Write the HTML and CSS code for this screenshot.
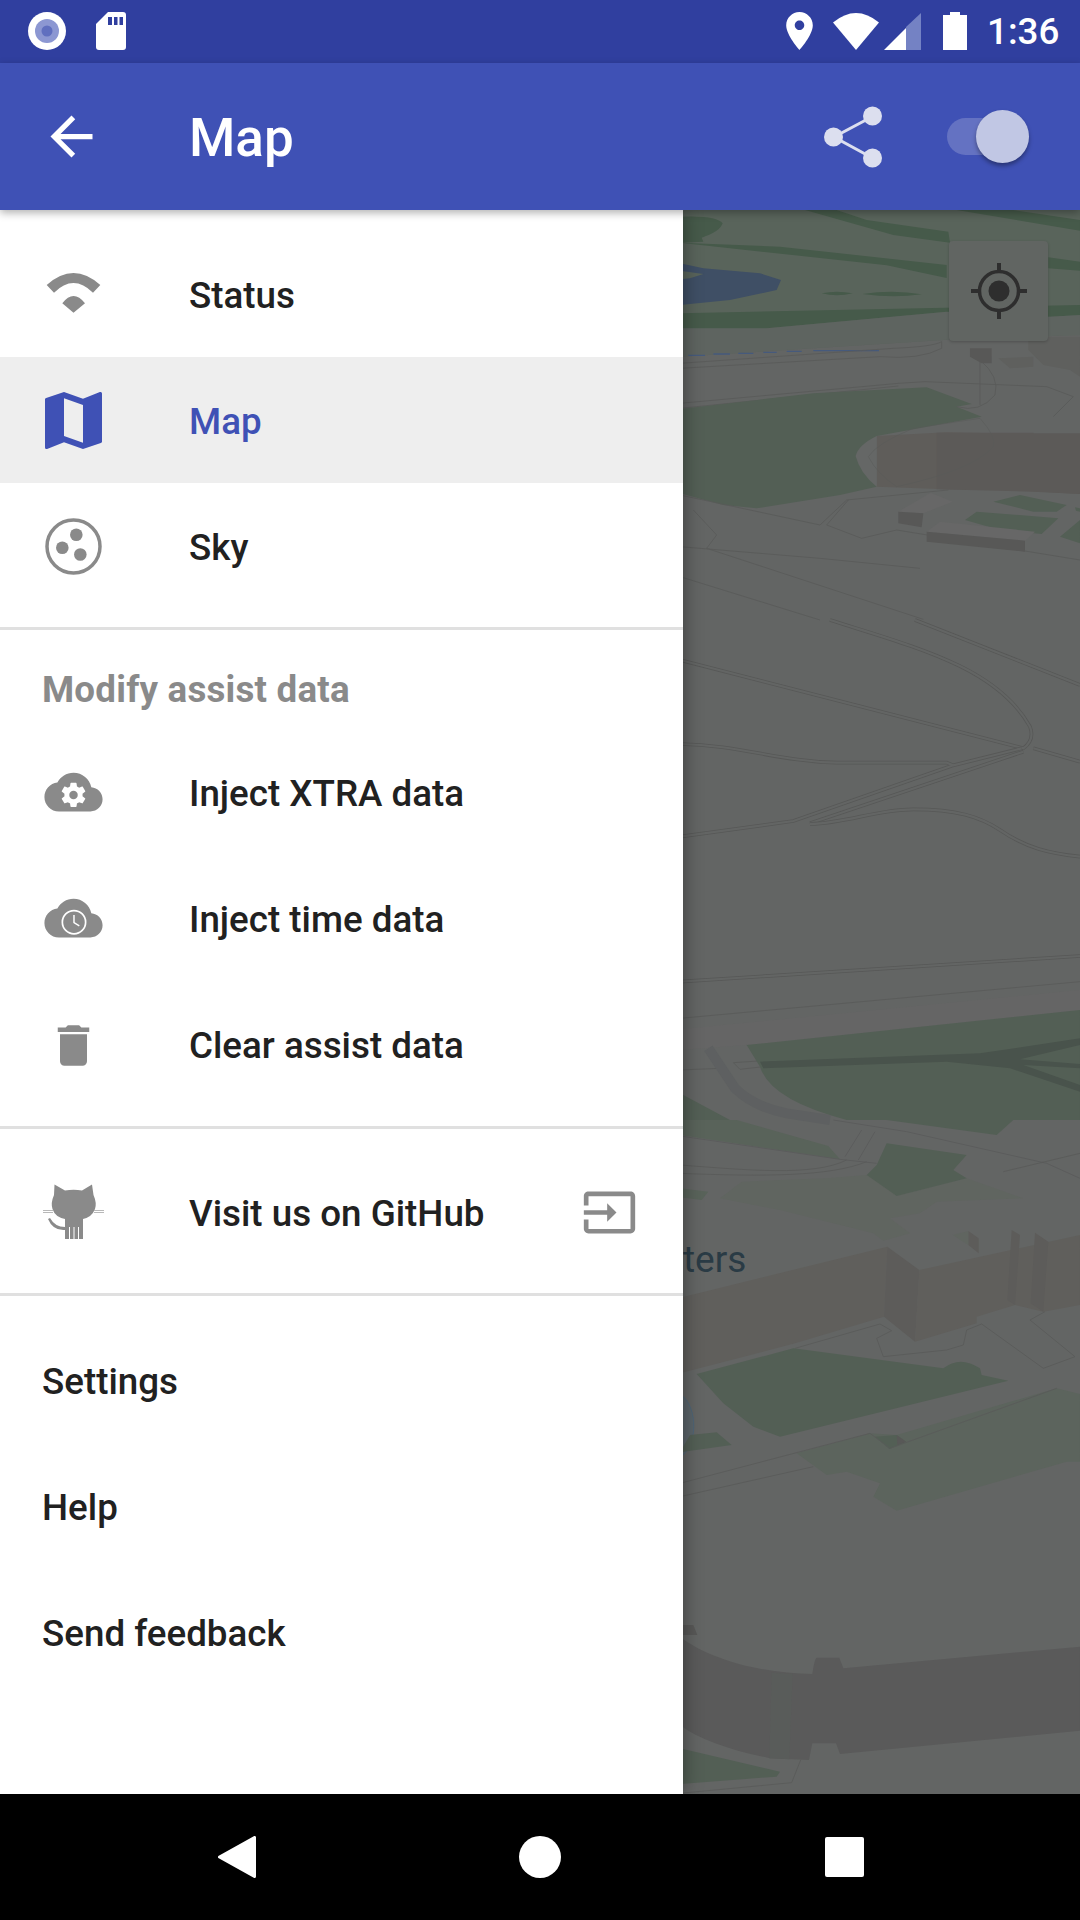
FILE: index.html
```html
<!DOCTYPE html>
<html lang="en">
<head>
  <meta charset="UTF-8" />
  <meta name="viewport" content="width=device-width, initial-scale=1.0" />
  <title>Map</title>
  <link rel="stylesheet" href="styles.css">
</head>
<body>
  <!-- Status bar -->
  <div class="status-bar">
    <svg class="st-record" viewBox="0 0 38 38"><circle cx="19" cy="19" r="19" fill="#fff"/><circle cx="19" cy="19" r="12" fill="#8c97d2"/><circle cx="19" cy="19" r="5.5" fill="#606fbf"/></svg>
    <svg class="st-sd" viewBox="0 0 30 38"><path d="M12 0h15a3 3 0 0 1 3 3v32a3 3 0 0 1-3 3H3a3 3 0 0 1-3-3V12z" fill="#fff"/><path d="M12 5h4v8h-4zM18 5h3.500v8H18zM23.500 5H27v8h-3.500z" fill="#303f9f"/></svg>
    <div class="st-right">
      <svg class="st-pin" viewBox="5 2 14 20"><path fill="#fff" d="M12 2C8.130 2 5 5.130 5 9c0 5.250 7 13 7 13s7-7.750 7-13c0-3.870-3.130-7-7-7zm0 9.500c-1.380 0-2.500-1.120-2.500-2.500s1.120-2.500 2.500-2.500 2.500 1.120 2.500 2.500-1.120 2.500-2.500 2.500z"/></svg>
      <svg class="st-wifi" viewBox="0 0 46 37"><path fill="#fff" d="M0 9.500Q23-9.500 46 9.500L23 37z"/></svg>
      <svg class="st-signal" viewBox="0 0 37 37"><path fill="#7482c4" d="M37 0v37H22V14z"/><path fill="#fff" d="M0 37l22-22v22z"/></svg>
      <svg class="st-battery" viewBox="0 0 24 38"><path fill="#fff" d="M7 0h10v3h7v35H0V3h7z"/></svg>
      <span class="st-time">1:36</span>
    </div>
  </div>

  <!-- Toolbar -->
  <header class="toolbar">
    <svg class="tb-back" viewBox="0 0 24 24"><path fill="#fff" d="M20 11H7.830l5.590-5.590L12 4l-8 8 8 8 1.410-1.410L7.830 13H20v-2z"/></svg>
    <h1 class="tb-title">Map</h1>
    <svg class="tb-share" viewBox="0 0 58 62"><path d="M48.500 10.500L10 31l38.500 21" fill="none" stroke="#dcdfef" stroke-width="3"/><circle cx="48.500" cy="10" r="9.500" fill="#dcdfef"/><circle cx="9.500" cy="31" r="9.500" fill="#dcdfef"/><circle cx="48.500" cy="52" r="9.500" fill="#dcdfef"/></svg>
    <div class="tb-switch"><span class="tb-thumb"></span></div>
  </header>

  <main class="content">
    <!-- Map behind the drawer, drawn already dimmed by the scrim -->
    <svg class="map" viewBox="680 210 400 1584">
      <defs>
        <path id="r1" d="M450 0C700 80 950 140 1050 320Q1065 360 1030 385L0 120M705 0L1200 195M1060 385L1200 425"/>
        <path id="r2" d="M0 372C180 375 300 425 470 428H800L820 436 1025 385M0 650L340 603 820 436M390 610L1030 395"/>
        <path id="r3" d="M390 612C500 610 590 568 700 568 830 568 900 590 960 630 1040 685 1110 700 1200 710"/>
        <path id="r4" d="M0 1085L1200 1008"/>
      </defs>
      <rect class="m-ground" x="680" y="210" width="400" height="1584"/>

      <!-- coordinates below are in thirds of a pixel, one group per map band -->
      <g transform="translate(680 200) scale(.33333)">
        <path class="m-pale" d="M0 30H1200V405L790 420 400 445 0 470z"/>
        <path class="m-dark" d="M0 50Q110 45 128 70 120 95 65 113L70 125 0 128z"/>
        <path class="m-dark" d="M0 128L620 196 800 234V195L300 140z"/>
        <path class="m-dark" d="M375 30L640 105 810 128 805 95 560 60 470 30z"/>
        <path class="m-dark" d="M830 30L1200 92V60L1000 30zM1105 172L1200 185V212L1105 205z"/>
        <path class="m-water" d="M0 190L70 205 240 220 303 240 290 270 150 300 0 315z"/>
        <path class="m-pale" d="M0 212L70 222 30 235 0 238z"/>
        <path class="m-dark" d="M425 280Q470 270 518 280 470 292 425 280zM547 282Q640 268 725 283 640 295 547 282z"/>
        <path class="m-dark" d="M0 340L1200 315V345L1110 350 800 335 260 385H0z"/>
        <path class="m-ground" d="M0 385L260 385 800 335 1105 350 1200 345V405L790 420 400 445 0 470z" opacity=".55"/>
        <path class="m-bluedash" d="M25 466H75M100 462H150M175 460H220M250 457H290M320 454H365M400 452H597"/>
        <path class="m-line" d="M0 490L640 445Q760 440 785 425V445Q720 480 600 470L0 505"/>
        <path class="m-line" d="M0 610L655 550 735 545 1100 560 1180 590 1120 650M0 625L655 558"/>
        <path class="m-green" d="M0 627L400 580 740 562 875 612 830 620 905 650 590 708 527 768 590 860 480 885 230 925 130 915 0 880z"/>
        <path class="m-facade" d="M590 708L800 697 1200 705V882L1000 870 800 868 590 860z"/>
        <path class="m-facade2" d="M770 698H1060V875L770 868zM1060 700H1200V882L1060 875z"/>
        <path class="m-concrete" d="M590 708Q535 735 527 768 540 820 590 860z"/>
        <path class="m-line" d="M565 770Q590 730 700 685L900 655Q950 710 940 740 880 810 650 860 590 820 565 770z" opacity=".6"/>
        <path class="m-line" d="M900 615V480Q960 530 945 585 900 640 830 620"/>
        <path class="m-block" d="M870 445L935 445 935 490 905 490 870 470z"/>
        <path class="m-soft2" d="M955 475L1060 470V500L990 505zM1045 410H1200V530L1170 510 1090 495 1045 450z"/>
        <path class="m-line" d="M0 885L420 975 500 900 805 870M0 1040L420 1075 720 1105M40 930L110 1005 80 1045 730 1258M0 1130L420 1260M505 900L440 975 545 1015 650 990 1200 1080"/>
        <path class="m-roof" d="M655 935L752 878 818 905 730 940z"/>
        <path class="m-block" d="M655 935L730 940 725 982 655 970z"/>
        <path class="m-green" d="M940 905L1020 885 1160 915 1130 935 1060 935zM855 960L890 935 1135 955 1085 1002 960 990zM1140 1010L1200 960V1030zM1185 922L1200 925V935L1188 932z"/>
        <path class="m-roof" d="M740 995L780 965 1065 995 1035 1022z"/>
        <path class="m-block" d="M740 995L1035 1022V1055L740 1025z"/>
      </g>

      <g transform="translate(680 620) scale(.33333)">
        <use href="#r1" class="m-road"/><use href="#r1" class="m-road-in"/>
        <use href="#r2" class="m-road"/><use href="#r2" class="m-road-in"/>
        <use href="#r3" class="m-road"/><use href="#r3" class="m-road-in"/>
        <use href="#r4" class="m-road"/><use href="#r4" class="m-road-in"/>
        <path class="m-line" d="M0 1195L1200 1085M0 1350L120 1345M160 1328L180 1348 250 1340M160 1328L250 1322"/>
        <path class="m-band" d="M0 1228L1200 1110V1170L200 1275 0 1290z"/>
        <path class="m-green" d="M200 1275L1200 1170V1500H500Q270 1440 240 1340z"/>
        <path class="m-band2" d="M240 1325L900 1300 1200 1255V1275L1020 1318 1200 1332V1345L1030 1335 1200 1395V1415L990 1345 800 1325 250 1345z"/>
        <path class="m-green" d="M0 1420L150 1500H0z"/>
        <path class="m-path" d="M85 1285L165 1405Q220 1460 320 1480L450 1500"/>
      </g>

      <g transform="translate(680 1120) scale(.33333)">
        <path class="m-lawn" d="M0 0V45L480 118 445 78 170 0zM0 205L85 215 65 240 0 232z"/>
        <path class="m-green" d="M620 0L950 45 1000 0z"/>
        <path class="m-road2" d="M0 48L480 118 590 130M460 0L680 35 1100 130 1200 175"/>
        <path class="m-soft" d="M120 235L185 185 440 175 560 165 650 228 860 175 1030 235 770 245 720 280 630 295 690 340 610 362 580 340 300 270z"/>
        <path class="m-green" d="M590 135L620 70 860 105 820 150 860 175 650 228 560 165z"/>
        <path class="m-road2" d="M545 30L495 110M585 35L535 120" />
        <path class="m-line" d="M0 135C200 150 400 170 500 120M0 160C250 170 450 170 560 125M970 155L1200 100"/>
        <path class="m-wall" d="M0 533L622 380 612 590 345 670 0 760z"/>
        <path class="m-wallside" d="M622 380L718 450 705 665 612 590z"/>
        <path class="m-wall" d="M718 450L1200 345V555L1090 575 1005 555 890 590V610L705 665z"/>
        <path class="m-wallside" d="M995 330L1020 345 1005 555 982 540zM1065 338L1105 365 1090 575 1052 550zM865 333L896 355V400L865 375z"/>
        <path class="m-soft" d="M818 345L865 333V375z"/>
        <path class="m-line" d="M345 685L600 612 635 632 590 655 610 710 800 690 850 675 860 630 905 612 1090 745 1185 710 1050 600 1095 575"/>
        <path class="m-green" d="M50 762L340 685 790 745Q840 705 900 745L905 765 985 782 300 950 220 920 130 850z"/>
        <path class="m-circle" d="M0 822C60 860 50 990 0 1010z"/>
        <path class="m-green" d="M30 945L110 937 155 975 0 997z"/>
        <path class="m-lawn2" d="M350 1000L570 940 650 945 1130 805 1200 822V1025H1160L650 1172 580 1130 600 1090 500 1055 440 1065z"/>
        <path class="m-green" d="M585 950L650 945 678 965 628 987z"/>
        <path class="m-block" d="M650 945L678 965 652 975z"/>
        <path class="m-line" d="M0 1090L570 940M0 1130L400 1040M570 940L630 985 1130 805"/>
      </g>

      <g transform="translate(680 1520) scale(.33333)">
        <path class="m-block" d="M0 315H40L52 345H0z"/>
        <path class="m-wallgrey" d="M0 350C90 420 250 460 397 462 400 440 405 415 410 413H478L490 445 1200 380V632L480 702 468 670H397L387 720 270 715C150 690 60 660 0 615z"/>
        <path class="m-wallgrey2" d="M275 458L338 462 328 718 268 715z"/>
        <path class="m-green" d="M0 685L300 755 290 770 0 792z"/>
        <path class="m-line" d="M362 720L335 788 0 820"/>
      </g>

      <text class="m-label" x="683" y="1272">ters</text>
    </svg>

    <button class="locate-btn">
      <svg viewBox="0 0 60 60"><circle cx="30" cy="30" r="19.500" fill="none" stroke="#2e2e2e" stroke-width="3.500"/><circle cx="30" cy="30" r="10.500" fill="#2e2e2e"/><path d="M30 2v9M30 49v9M2 30h9M49 30h9" stroke="#2e2e2e" stroke-width="4"/></svg>
    </button>

    <!-- Navigation drawer -->
    <nav class="drawer">
      <section class="group group-first">
        <div class="row">
          <svg class="row-icon" viewBox="0 0 63 63"><path class="ic" d="M4.700 22Q31.500-2 58.300 22L51 29.700Q31.500 10.300 12 29.700zM20.300 40.300Q31.500 25.700 43 40.300L31.500 49.700z"/></svg>
          <span class="row-label">Status</span>
        </div>
        <div class="row row-active">
          <svg class="row-icon" viewBox="2.050 2.050 19.900 19.900"><path d="M20.500 3l-.16.030L15 5.100 9 3 3.360 4.900c-.21.070-.36.250-.36.480V20.500c0 .28.220.5.5.5l.16-.03L9 18.900l6 2.100 5.640-1.900c.21-.07.36-.25.36-.48V3.500c0-.28-.22-.5-.5-.5zM15 19l-6-2.110V5l6 2.110V19z" fill="#3f51b5"/></svg>
          <span class="row-label">Map</span>
        </div>
        <div class="row">
          <svg class="row-icon" viewBox="0 0 63 63"><circle cx="31.500" cy="31.500" r="26.500" fill="none" stroke="#8a8a8a" stroke-width="3.500"/><circle class="ic" cx="34.300" cy="19.800" r="6.300"/><circle class="ic" cx="20.300" cy="32.800" r="6.300"/><circle class="ic" cx="38.300" cy="39.500" r="6.300"/></svg>
          <span class="row-label">Sky</span>
        </div>
      </section>

      <section class="group">
        <div class="group-title">Modify assist data</div>
        <div class="row">
          <svg class="row-icon" viewBox="-1 -.4 26 26">
            <path class="ic" d="M19.350 10.040C18.670 6.590 15.640 4 12 4 9.110 4 6.600 5.640 5.350 8.040 2.340 8.360 0 10.910 0 14c0 3.310 2.690 6 6 6h13c2.760 0 5-2.240 5-5 0-2.640-2.050-4.780-4.650-4.960z"/>
            <g transform="translate(6 7.200) scale(.5)"><path fill="#fff" d="M19.430 12.980c.04-.32.070-.64.070-.98s-.03-.66-.07-.98l2.110-1.650c.19-.15.24-.42.12-.64l-2-3.460c-.12-.22-.39-.3-.61-.22l-2.490 1c-.52-.4-1.080-.73-1.690-.98l-.38-2.650C14.460 2.180 14.250 2 14 2h-4c-.25 0-.46.18-.49.420l-.38 2.650c-.61.25-1.170.59-1.690.98l-2.490-1c-.23-.09-.49 0-.61.22l-2 3.460c-.13.22-.07.49.12.64l2.110 1.650c-.04.32-.07.65-.07.98s.03.66.07.98l-2.110 1.650c-.19.15-.24.42-.12.64l2 3.460c.12.22.39.3.61.22l2.490-1c.52.4 1.080.73 1.690.98l.38 2.650c.03.24.24.42.49.42h4c.25 0 .46-.18.49-.42l.38-2.650c.61-.25 1.170-.59 1.690-.98l2.490 1c.23.09.49 0 .61-.22l2-3.460c.12-.22.07-.49-.12-.64l-2.110-1.650z"/><circle class="ic" cx="12" cy="12" r="3.500"/></g>
          </svg>
          <span class="row-label">Inject XTRA data</span>
        </div>
        <div class="row">
          <svg class="row-icon" viewBox="-1 -.4 26 26">
            <path class="ic" d="M19.350 10.040C18.670 6.590 15.640 4 12 4 9.110 4 6.600 5.640 5.350 8.040 2.340 8.360 0 10.910 0 14c0 3.310 2.690 6 6 6h13c2.760 0 5-2.240 5-5 0-2.640-2.050-4.780-4.650-4.960z"/>
            <circle cx="12.200" cy="13.700" r="4.800" fill="none" stroke="#fff" stroke-width=".7"/><path d="M12.200 10.700v3.200l2.200 1.300" fill="none" stroke="#fff" stroke-width=".6"/>
          </svg>
          <span class="row-label">Inject time data</span>
        </div>
        <div class="row">
          <svg class="row-icon" viewBox="-2 -2 28 28"><path class="ic" d="M6 19c0 1.100.9 2 2 2h8c1.100 0 2-.9 2-2V7H6v12zM19 4h-3.500l-1-1h-5l-1 1H5v2h14V4z"/></svg>
          <span class="row-label">Clear assist data</span>
        </div>
      </section>

      <section class="group group-link">
        <div class="row">
          <svg class="row-icon" viewBox="0 0 63 63">
            <path class="ic" d="M12.500 3.500L23 9.500Q31.700 8 40 9.500L50 3.500 51.500 14Q55 22 53 28 50 36 41 38V58H23V38Q13 36 10.500 28 8.500 22 12 14z"/>
            <path class="ic" d="M8 37Q13 46 23 46V49Q11 50 6 38z"/>
            <path d="M1 29.500H11M1 31.500H11M52 29.500H62M52 31.500H62" stroke="#b8b8b8" stroke-width="1.200"/>
            <path d="M27.500 46V59M32 46V59M36.500 46V59" stroke="#fff" stroke-width="1"/>
          </svg>
          <span class="row-label">Visit us on GitHub</span>
          <svg class="row-icon row-end" viewBox="-1.500 -1.500 27 27"><path class="ic" d="M21 3.010H3c-1.100 0-2 .9-2 2V9h2V4.990h18v14.030H3V15H1v4.010c0 1.100.9 1.980 2 1.980h18c1.100 0 2-.88 2-1.980v-14c0-1.110-.9-2-2-2zM11 16l4-4-4-4v3H1v2h10v3z"/></svg>
        </div>
      </section>

      <section class="group group-plain">
        <div class="row"><span class="row-label">Settings</span></div>
        <div class="row"><span class="row-label">Help</span></div>
        <div class="row"><span class="row-label">Send feedback</span></div>
      </section>
    </nav>
  </main>

  <!-- System navigation -->
  <footer class="nav-bar">
    <svg class="nb-back" viewBox="0 0 38 42"><path fill="#fff" stroke="#fff" stroke-width="3" stroke-linejoin="round" d="M36.500 1.500V40.500L1.500 21z"/></svg>
    <span class="nb-home"></span>
    <span class="nb-recent"></span>
  </footer>
</body>
</html>
```

FILE: styles.css
```css
* {
  box-sizing: border-box;
}
body {
  margin: 0;
  width: 1080px;
  height: 1920px;
  display: flex;
  flex-direction: column;
  font-family: Roboto, sans-serif;
  overflow: hidden;
  background: #000;
}

/* Status bar */
.status-bar {
  height: 63px;
  flex: none;
  display: flex;
  align-items: flex-start;
  padding: 12px 22px 0 28px;
  background: #303f9f;
}
.st-record { width: 38px; height: 38px; }
.st-sd { width: 30px; height: 38px; margin-left: 30px; }
.st-right {
  margin-left: auto;
  display: flex;
  align-items: flex-start;
}
.st-pin { width: 27px; height: 38px; }
.st-wifi { width: 46px; height: 37px; margin: 1px 0 0 20px; }
.st-signal { width: 37px; height: 37px; margin: 1px 0 0 5px; }
.st-battery { width: 24px; height: 38px; margin-left: 22px; }
.st-time {
  margin-left: 20px;
  width: 71px;
  color: #fff;
  font-size: 36.75px;
  font-weight: 500;
  line-height: 40px;
}

/* Toolbar */
.toolbar {
  height: 147px;
  flex: none;
  display: flex;
  align-items: center;
  padding: 0 51px 0 40px;
  background: #3f51b5;
  box-shadow: 0 3px 8px rgba(0,0,0,0.3);
  position: relative;
  z-index: 5;
}
.tb-back { width: 63px; height: 63px; }
.tb-title {
  margin: 3px 0 0 86px;
  color: #fff;
  font-size: 53px;
  font-weight: 500;
}
.tb-share { width: 58px; height: 62px; margin-left: auto; }
.tb-switch {
  position: relative;
  width: 82px;
  height: 37px;
  margin-left: 65px;
  border-radius: 19px;
  background: #6472c2;
}
.tb-thumb {
  position: absolute;
  top: -8px;
  right: 0;
  width: 53px;
  height: 53px;
  border-radius: 50%;
  background: #c1c7e4;
  box-shadow: 0 3px 4px rgba(0,0,0,0.35);
}

/* Content area */
.content {
  position: relative;
  flex: 1;
  min-height: 0;
}

/* Map */
.map {
  position: absolute;
  top: 0;
  left: 680px;
  width: 400px;
  height: 1584px;
}
.m-ground { fill: #636564; }
.m-pale { fill: #59645b; }
.m-dark { fill: #465a4a; }
.m-water { fill: #3f4f65; }
.m-green { fill: #535f55; }
.m-lawn { fill: #59635a; }
.m-lawn2 { fill: #5c645d; }
.m-soft { fill: #606560; }
.m-soft2 { fill: #5f605e; }
.m-band { fill: #656565; }
.m-band2 { fill: #49534c; }
.m-facade { fill: #5f5d5a; }
.m-facade2 { fill: #5c5a58; }
.m-concrete { fill: #656766; }
.m-block { fill: #585857; }
.m-roof { fill: #676767; }
.m-wall { fill: #605f5c; }
.m-wallside { fill: #5d5c5a; }
.m-wallgrey { fill: #5a5a5a; }
.m-wallgrey2 { fill: #595c5a; }
.m-circle { fill: #5b656a; stroke: #47657f; stroke-width: 2; }
.m-line {
  fill: none;
  stroke: #595a59;
  stroke-width: 2.5;
}
.m-road {
  fill: none;
  stroke: #575857;
  stroke-width: 11;
}
.m-road-in {
  fill: none;
  stroke: #636564;
  stroke-width: 6.5;
}
.m-road2 {
  fill: none;
  stroke: #5b5c5c;
  stroke-width: 3;
}
.m-path {
  fill: none;
  stroke: #5e6061;
  stroke-width: 30;
}
.m-bluedash {
  fill: none;
  stroke: #465a7c;
  stroke-width: 4;
}
.m-label {
  fill: #2a3b45;
  font-size: 37px;
  font-family: Roboto, sans-serif;
}

/* My-location button */
.locate-btn {
  position: absolute;
  top: 31px;
  left: 949px;
  width: 99px;
  height: 100px;
  display: flex;
  align-items: center;
  justify-content: center;
  padding: 0;
  border: none;
  border-radius: 4px;
  background: #616562;
  box-shadow: 0 1px 3px rgba(0,0,0,0.2);
}
.locate-btn svg { width: 60px; height: 60px; }

/* Drawer */
.drawer {
  position: relative;
  width: 683px;
  height: 100%;
  background: #fff;
  box-shadow: 0 0 18px rgba(0,0,0,0.4);
  z-index: 2;
}
.group {
  padding-bottom: 18px;
  border-bottom: 3px solid #e0e0e0;
}
.group-first { padding-top: 21px; }
.group-first .row-label { padding-top: 2px; }
.group-link { padding-top: 20px; }
.group-link .row-label { padding-top: 2px; }
.group-plain {
  padding-top: 22px;
  border-bottom: none;
}
.group-title {
  height: 100px;
  padding: 18px 42px 0;
  display: flex;
  align-items: center;
  color: #8a8a8a;
  font-size: 36.75px;
  font-weight: 700;
  letter-spacing: 0.2px;
}
.row {
  height: 126px;
  display: flex;
  align-items: center;
  padding: 0 42px;
  color: #212121;
  font-size: 36.75px;
  font-weight: 500;
}
.row-active {
  background: #eeeeee;
  color: #3f51b5;
}
.row-icon {
  width: 63px;
  height: 63px;
  flex: none;
  margin-right: 84px;
}
.row-end {
  margin: 0 0 0 auto;
}
.ic { fill: #8a8a8a; }

/* System navigation */
.nav-bar {
  height: 126px;
  flex: none;
  display: flex;
  align-items: center;
  justify-content: center;
  padding-left: 1px;
  background: #000;
}
.nb-back { width: 38px; height: 42px; }
.nb-home {
  width: 42px;
  height: 42px;
  margin-left: 263px;
  border-radius: 50%;
  background: #fff;
}
.nb-recent {
  width: 39px;
  height: 40px;
  margin-left: 264px;
  border-radius: 2px;
  background: #fff;
}
```
